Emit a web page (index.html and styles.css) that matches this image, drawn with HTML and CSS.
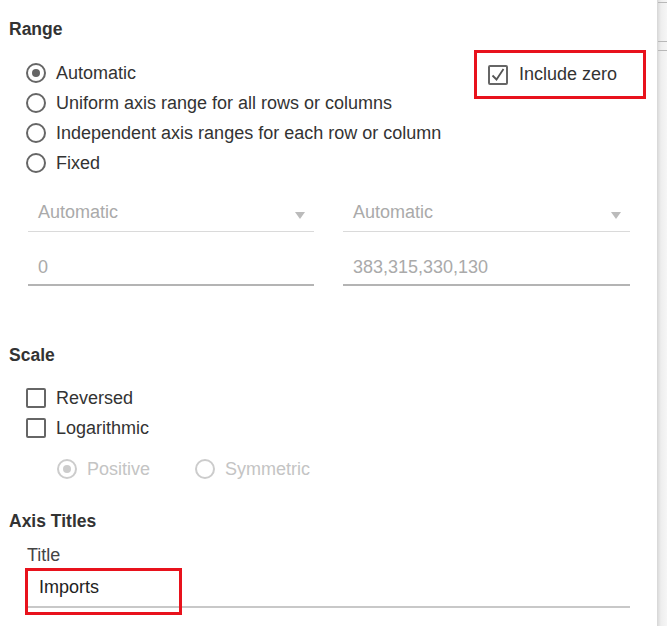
FILE: index.html
```html
<!DOCTYPE html>
<html>
<head>
<meta charset="utf-8">
<link rel="stylesheet" href="styles.css">
</head>
<body>
<div class="page">
  <div class="panel">
    <h3 class="heading h-range">Range</h3>
    <div class="range-row">
      <div class="radio-list">
        <div class="opt"><span class="radio checked"></span><span>Automatic</span></div>
        <div class="opt"><span class="radio"></span><span>Uniform axis range for all rows or columns</span></div>
        <div class="opt"><span class="radio"></span><span>Independent axis ranges for each row or column</span></div>
        <div class="opt"><span class="radio"></span><span>Fixed</span></div>
      </div>
      <div class="incl">
        <span class="check on"><svg viewBox="0 0 20 20" width="20" height="20"><path d="M4.5 10.5 L8.5 14.5 L15.5 4" fill="none" stroke="#555" stroke-width="1.8"/></svg></span>
        <span>Include zero</span>
      </div>
    </div>

    <div class="fields">
      <div class="field sel"><span>Automatic</span><span class="arrow"></span></div>
      <div class="field sel"><span>Automatic</span><span class="arrow"></span></div>
      <div class="field inp"><span>0</span></div>
      <div class="field inp"><span>383,315,330,130</span></div>
    </div>

    <h3 class="heading h-scale">Scale</h3>
    <div class="check-list">
      <div class="opt"><span class="check"></span><span>Reversed</span></div>
      <div class="opt"><span class="check"></span><span>Logarithmic</span></div>
    </div>
    <div class="sub-radios">
      <div class="opt dis w-pos"><span class="radio checked"></span><span>Positive</span></div>
      <div class="opt dis"><span class="radio"></span><span>Symmetric</span></div>
    </div>

    <h3 class="heading h-axis">Axis Titles</h3>
    <div class="title-lbl">Title</div>
    <div class="title-field">
      <span>Imports</span>
      <div class="mark"></div>
    </div>
  </div>
  <div class="edge">
    <div class="eline l1"></div>
    <div class="eline l2"></div>
    <div class="eline l3"></div>
  </div>
</div>
</body>
</html>
```

FILE: styles.css
```css
* { box-sizing: border-box; }
html, body { margin: 0; padding: 0; background: #fff; }
body {
  font-family: "Liberation Sans", Arial, sans-serif;
  font-size: 18px;
  color: #333;
  width: 667px;
  height: 626px;
  overflow: hidden;
}
.page { display: flex; height: 626px; }
.panel { width: 657px; padding-left: 9px; }
.edge {
  width: 10px;
  height: 626px;
  background: linear-gradient(to right, #d6d6d6, #eeeeee 40%, #f6f6f6);
  display: flex;
  flex-direction: column;
}
.eline { height: 1px; background: #b8b8b8; margin-left: 1px; }
.l1 { margin-top: 2px; }
.l2 { margin-top: 38px; }
.l3 { margin-top: 8px; }

.heading {
  margin: 0;
  font-size: 17.5px;
  font-weight: bold;
  line-height: 20px;
  color: #333;
}
.h-range { margin-top: 19px; }
.h-scale { margin-top: 59px; }
.h-axis { margin-top: 27px; }

.range-row {
  display: flex;
  justify-content: space-between;
  align-items: flex-start;
  margin-top: 11px;
}
.radio-list { padding-top: 8px; padding-left: 17px; }
.opt {
  display: flex;
  align-items: center;
  height: 30px;
  gap: 10px;
}
.radio {
  width: 20px;
  height: 20px;
  border: 2px solid #666;
  border-radius: 50%;
  display: flex;
  align-items: center;
  justify-content: center;
  flex: none;
}
.radio.checked::after {
  content: "";
  width: 8px;
  height: 8px;
  border-radius: 50%;
  background: #666;
}
.check {
  width: 20px;
  height: 20px;
  border: 2px solid #666;
  border-radius: 2px;
  flex: none;
  display: flex;
  align-items: center;
  justify-content: center;
}
.check svg { display: block; margin: -2px; }

.incl {
  width: 172px;
  height: 49px;
  margin-right: 11px;
  border: 3px solid #e8121c;
  display: flex;
  align-items: center;
  gap: 10px;
  padding-left: 11px;
  padding-top: 0;
}
.incl span:last-child { margin-left: 1px; }

.fields {
  display: grid;
  grid-template-columns: 286px 287px;
  column-gap: 29px;
  row-gap: 19px;
  padding-left: 19px;
  margin-top: 20px;
}
.field {
  display: flex;
  align-items: center;
  justify-content: space-between;
  padding: 0 9px 0 10px;
  color: #aaa;
}
.sel { border-bottom: 1.5px solid #dadada; height: 34px; padding-bottom: 4px; }
.inp { border-bottom: 2px solid #b4b4b4; height: 35px; }
.arrow {
  width: 0;
  height: 0;
  border-left: 5px solid transparent;
  border-right: 5px solid transparent;
  border-top: 7px solid #bbb;
  margin-top: 6px;
}

.check-list { padding-left: 17px; margin-top: 18px; }
.sub-radios {
  display: flex;
  padding-left: 48px;
  margin-top: 11px;
}
.w-pos { width: 138px; }
.opt.dis { color: #c4c4c4; }
.opt.dis .radio { border-color: #cccccc; }
.opt.dis .radio.checked::after { background: #cccccc; }

.title-lbl {
  padding-left: 18px;
  margin-top: 14px;
  line-height: 20px;
  color: #444;
}
.title-field {
  position: relative;
  margin-left: 19px;
  width: 602px;
  height: 36px;
  margin-top: 7px;
  border-bottom: 2px solid #c8c8c8;
  padding-left: 11px;
  display: flex;
  align-items: center;
  color: #222;
  padding-bottom: 4px;
}
.mark {
  position: absolute;
  left: -3px;
  top: -4px;
  width: 157px;
  height: 47px;
  border: 3px solid #e8121c;
}
```
